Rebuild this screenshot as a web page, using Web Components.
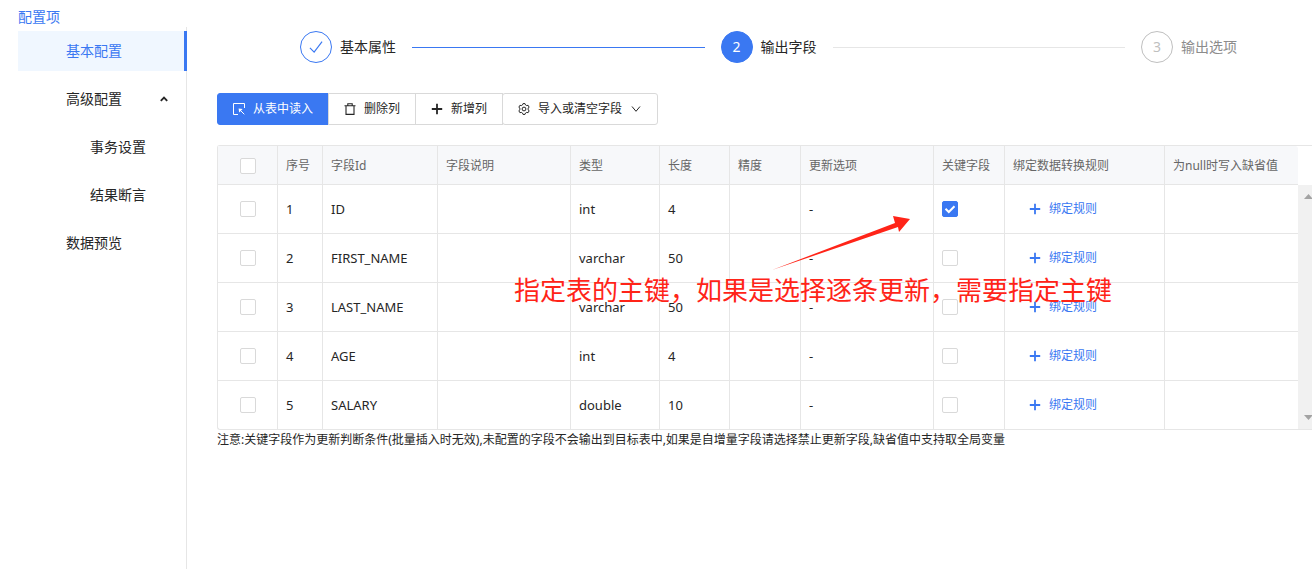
<!DOCTYPE html>
<html lang="zh-CN">
<head>
<meta charset="utf-8">
<title>配置项</title>
<style>
  html, body { height: 100%; }
  body {
    margin: 0;
    overflow: hidden;
    background: #fff;
    color: #262626;
    font: 14px/20px "Noto Sans", "Noto Sans CJK SC", sans-serif;
    --blue: #3a78f2;
    --line: #e6e6e6;
  }
</style>
</head>
<body>
<config-page>
  <side-menu slot="side" heading="配置项">
    <menu-entry active>基本配置</menu-entry>
    <menu-entry expanded>高级配置</menu-entry>
    <menu-entry nested>事务设置</menu-entry>
    <menu-entry nested>结果断言</menu-entry>
    <menu-entry>数据预览</menu-entry>
  </side-menu>
  <step-bar>
    <step-item state="done" number="1">基本属性</step-item>
    <step-item state="current" number="2">输出字段</step-item>
    <step-item state="waiting" number="3" last>输出选项</step-item>
  </step-bar>
  <tool-bar>
    <tool-button primary icon="select">从表中读入</tool-button>
    <tool-button icon="trash">删除列</tool-button>
    <tool-button icon="plus">新增列</tool-button>
    <tool-button icon="gear" dropdown>导入或清空字段</tool-button>
  </tool-bar>
  <field-table>
    <callout-note slot="note">指定表的主键，如果是选择逐条更新，需要指定主键</callout-note>
  </field-table>
  <foot-note>注意:关键字段作为更新判断条件(批量插入时无效),未配置的字段不会输出到目标表中,如果是自增量字段请选择禁止更新字段,缺省值中支持取全局变量</foot-note>
</config-page>

<script>
const ICONS = {
  select: '<path d="M11.500 5V.5H.5v11H5" /><path d="M11.300 11.300 7 7" /><path d="M5.600 5.600 9.600 6.100 6.100 9.600z" fill="currentColor" stroke="none" />',
  trash: '<path d="M.5 2.700h11M3.800 2.500V.7h4.400v1.800M2 2.800v8.600h8V2.800" stroke-width="1.100" />',
  plus: '<path d="M6 .8v10.400M.8 6h10.400" stroke-width="1.800" />',
  gear: '<path d="M4.500 1.900 5 .6h2l.5 1.300 1.200.7 1.400-.3 1 1.800-.9 1v1.800l.9 1-1 1.800-1.400-.3-1.200.7L7 11.400H5l-.5-1.300-1.200-.7-1.400.3-1-1.800.9-1V5.100l-.9-1 1-1.800 1.400.3z"/><circle cx="6" cy="6" r="1.900"/>',
  down: '<path d="M2 3.500 6 8.300l4-4.800" />',
  up: '<path d="M2.800 7.900 6 4.700l3.200 3.200" stroke-width="1.900" />',
  check: '<path d="M.8 6.800 4.400 10.400 11.200 1.400" />'
};
const icon = (name, size = 12) =>
  `<svg width="${size}" height="${size}" viewBox="0 0 12 12" fill="none" stroke="currentColor" aria-hidden="true">${ICONS[name]}</svg>`;

class Base extends HTMLElement {
  connectedCallback() {
    if (this.shadowRoot) return;
    this.attachShadow({ mode: 'open' }).innerHTML =
      `<style>*{box-sizing:border-box} svg{display:block;flex:none} ${this.css()}</style>${this.html()}`;
  }
}

customElements.define('config-page', class extends Base {
  css() { return `
    :host { display: grid; grid-template-columns: 187px minmax(0, 1fr); height: 100%; }
    main { padding: 31px 0 0 30px; min-width: 0; }`; }
  html() { return `<slot name="side"></slot><main><slot></slot></main>`; }
});

customElements.define('side-menu', class extends Base {
  css() { return `
    :host { display: flex; flex-direction: column; padding: 7px 0 0 18px; }
    h1 { margin: 0; font-size: 14px; font-weight: 400; line-height: 20px; color: var(--blue); }
    nav { flex: 1; display: flex; flex-direction: column; gap: 8px; padding-top: 4px; border-right: 1px solid var(--line); }`; }
  html() { return `<h1>${this.getAttribute('heading')}</h1><nav><slot></slot></nav>`; }
});

customElements.define('menu-entry', class extends Base {
  css() { return `
    :host { display: block; margin-right: -1px; }
    a { display: flex; align-items: center; justify-content: space-between; height: 40px; padding: 0 17px 0 48px;
        color: inherit; text-decoration: none; }
    :host([nested]) a { padding-left: 72px; }
    :host([active]) a { background: #f0f7ff; color: var(--blue); border-right: 3px solid var(--blue); }`; }
  html() { return `<a href="#"><slot></slot>${this.hasAttribute('expanded') ? icon('up') : ''}</a>`; }
});

customElements.define('step-bar', class extends Base {
  css() { return `:host { display: flex; gap: 16px; padding: 0 75px 0 83px; }`; }
  html() { return `<slot></slot>`; }
});

customElements.define('step-item', class extends Base {
  css() { return `
    :host { display: flex; align-items: center; flex: 1 1 auto; white-space: nowrap; }
    :host([last]) { flex: none; }
    .dot { display: flex; align-items: center; justify-content: center; width: 32px; height: 32px; margin-right: 8px;
           border: 1px solid var(--blue); border-radius: 50%; color: var(--blue); }
    .line { flex: 1; height: 1px; margin-left: 16px; background: var(--line); }
    :host([state=done]) .line { background: var(--blue); }
    :host([state=current]) .dot { background: var(--blue); color: #fff; }
    :host([state=waiting]) { color: #8c8c8c; }
    :host([state=waiting]) .dot { border-color: #bfbfbf; color: #bfbfbf; }
    :host([last]) .line { display: none; }`; }
  html() {
    const mark = this.getAttribute('state') === 'done' ? icon('check', 14) : this.getAttribute('number');
    return `<span class="dot">${mark}</span><slot></slot><span class="line"></span>`;
  }
});

customElements.define('tool-bar', class extends Base {
  css() { return `:host { display: flex; margin: 30px 0 20px; }`; }
  html() { return `<slot></slot>`; }
});

customElements.define('tool-button', class extends Base {
  css() { return `
    :host { display: block; margin-left: -1px; }
    :host(:first-child) { margin-left: 0; }
    button { display: flex; align-items: center; gap: 8px; height: 32px; margin: 0; padding: 0 15px;
             border: 1px solid #d9d9d9; background: #fff; color: inherit; font: inherit; font-size: 12px; white-space: nowrap; }
    :host([primary]) button { background: var(--blue); border-color: var(--blue); color: #fff; }
    :host(:first-child) button { border-radius: 3px 0 0 3px; }
    :host(:last-child) button { border-radius: 3px; }`; }
  html() { return `<button type="button">${icon(this.getAttribute('icon'))}<slot></slot>${this.hasAttribute('dropdown') ? icon('down') : ''}</button>`; }
});

customElements.define('check-box', class extends Base {
  css() { return `
    :host { display: block; width: 16px; height: 16px; }
    input { appearance: none; display: block; width: 16px; height: 16px; margin: 0; border: 1px solid #d9d9d9; border-radius: 2px; background: #fff; }
    input:checked { border-color: var(--blue);
      background: var(--blue) url("data:image/svg+xml,%3Csvg xmlns='http://www.w3.org/2000/svg' viewBox='0 0 14 14'%3E%3Cpath d='M2.500 6.800 5.800 10 11.500 4.300' fill='none' stroke='white' stroke-width='2'/%3E%3C/svg%3E"); }`; }
  html() { return `<input type="checkbox" aria-label="${this.getAttribute('label')}"${this.hasAttribute('checked') ? ' checked' : ''}>`; }
});

const ROWS = [
  ['ID', 'int', 4, true],
  ['FIRST_NAME', 'varchar', 50, false],
  ['LAST_NAME', 'varchar', 50, false],
  ['AGE', 'int', 4, false],
  ['SALARY', 'double', 10, false]
];

customElements.define('field-table', class extends Base {
  css() { return `
    :host { display: grid; grid-template-columns: minmax(0, 1fr) 14px; position: relative;
            border: solid var(--line); border-width: 1px 0 1px 1px; border-radius: 3px 0 0 3px; }
    table { width: 100%; table-layout: fixed; border-collapse: separate; border-spacing: 0; }
    th, td { padding: 0 8px; border: solid var(--line); border-width: 0 1px 1px 0; text-align: left; font-weight: 400; white-space: nowrap; }
    th { height: 39px; padding-top: 2px; background: #f7f8fa; color: #666; font-size: 12px; }
    td { height: 49px; font-size: 13px; }
    th:last-child, td:last-child { border-right: 0; }
    th:last-child { border-radius: 0 3px 0 0; }
    tbody tr:last-child td { height: 48px; border-bottom: 0; }
    .pick check-box { margin: 0 auto; }
    td button { display: flex; align-items: center; gap: 8px; margin: 0; padding: 0 16px; border: 0; background: none;
                color: var(--blue); font: inherit; font-size: 12px; }
    .bar { display: flex; flex-direction: column; justify-content: space-between; margin-top: 39px; padding: 9px 0 9px 6px;
           background: #f1f1f1; overflow: hidden; color: #a3a3a3; }
    .bar svg { fill: currentColor; }`; }
  html() {
    const widths = [60, 45, 115, 133, 89, 70, 71, 133, 71, 160];
    const heads = ['序号', '字段Id', '字段说明', '类型', '长度', '精度', '更新选项', '关键字段', '绑定数据转换规则', '为null时写入缺省值'];
    const rows = ROWS.map(([id, type, len, key], i) => `
      <tr><td class="pick"><check-box label="选择 ${id}"></check-box></td><td>${i + 1}</td><td>${id}</td><td></td>
      <td>${type}</td><td>${len}</td><td></td><td>-</td>
      <td><check-box label="关键字段 ${id}"${key ? ' checked' : ''}></check-box></td>
      <td><button type="button">${icon('plus')}绑定规则</button></td><td></td></tr>`).join('');
    return `
      <table>
        <colgroup>${widths.map(w => `<col style="width:${w}px">`).join('')}<col></colgroup>
        <thead><tr><th class="pick"><check-box label="全选"></check-box></th>${heads.map(h => `<th>${h}</th>`).join('')}</tr></thead>
        <tbody>${rows}</tbody>
      </table>
      <div class="bar" aria-hidden="true">
        <svg width="9" height="5" viewBox="0 0 9 5"><path d="M0 5 4.500 0 9 5z"/></svg>
        <svg width="9" height="5" viewBox="0 0 9 5"><path d="M0 0 4.500 5 9 0z"/></svg>
      </div>
      <slot name="note"></slot>`;
  }
});

customElements.define('callout-note', class extends Base {
  css() { return `
    :host { display: block; position: absolute; left: 296px; top: 68px; color: #ff2418; font-size: 26px; line-height: 40px;
            white-space: nowrap; pointer-events: none; }
    svg { margin-left: 256px; }`; }
  html() { return `<svg width="144" height="56" viewBox="0 0 144 56" aria-hidden="true"><path fill="currentColor" d="M2 56 125 9 123 2 140 5 129 18 128 13z"/></svg><slot></slot>`; }
});

customElements.define('foot-note', class extends Base {
  css() { return `:host { display: block; font-size: 12px; line-height: 20px; }`; }
  html() { return `<slot></slot>`; }
});
</script>
</body>
</html>
